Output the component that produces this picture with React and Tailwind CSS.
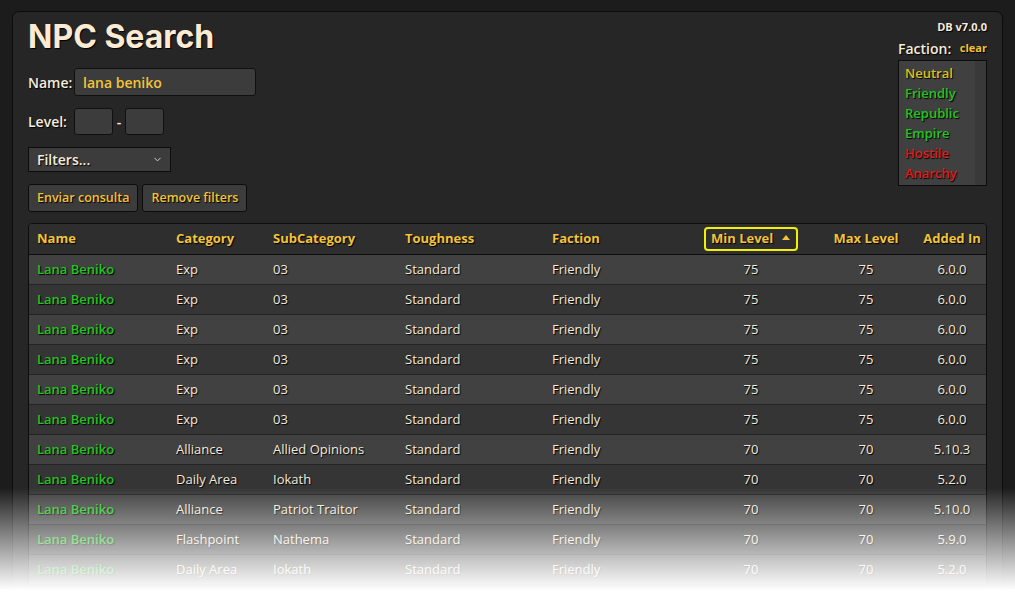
import { ChevronDown } from 'lucide-react';

const rows = [
  ['Exp', '03', 75, 75, '6.0.0'],
  ['Exp', '03', 75, 75, '6.0.0'],
  ['Exp', '03', 75, 75, '6.0.0'],
  ['Exp', '03', 75, 75, '6.0.0'],
  ['Exp', '03', 75, 75, '6.0.0'],
  ['Exp', '03', 75, 75, '6.0.0'],
  ['Alliance', 'Allied Opinions', 70, 70, '5.10.3'],
  ['Daily Area', 'Iokath', 70, 70, '5.2.0'],
  ['Alliance', 'Patriot Traitor', 70, 70, '5.10.0'],
  ['Flashpoint', 'Nathema', 70, 70, '5.9.0'],
  ['Daily Area', 'Iokath', 70, 70, '5.2.0'],
];

const factions = [
  ['Neutral', 'text-[#d8c21e]'],
  ['Friendly', 'text-[#22c322]'],
  ['Republic', 'text-[#22c322]'],
  ['Empire', 'text-[#22c322]'],
  ['Hostile', 'text-[#e21d1d]'],
  ['Anarchy', 'text-[#e21d1d]'],
];

const grid = 'grid grid-cols-[139px_97px_132px_147px_147px_120px_110px_68px]';
const shadow = '[text-shadow:1px_1px_1px_#000]';

function SortArrow() {
  return (
    <svg width="8" height="5" viewBox="0 0 8 5" className="ml-[9px] mb-[3px]">
      <path d="M0 5 L4 0 L8 5 Z" fill="#f2c43a" />
    </svg>
  );
}

export default function App() {
  return (
    <div className="relative h-[599px] w-full overflow-hidden bg-[#1c1c1c] px-[12px] pt-[11px] font-['Open_Sans',sans-serif]">
      <div className="h-[620px] rounded-t-[7px] border border-[#0c0c0c] bg-[#262626] px-[15px] pt-[7px]">
        <div className="flex justify-between">
          <div className="flex flex-col">
            <h1 className={`font-['Inter',sans-serif] text-[32px] font-bold leading-[36px] text-[#fcebd2] ${shadow}`}>NPC Search</h1>

            <div className="mt-[13px] flex items-center">
              <span className={`w-[46px] text-[14px] font-semibold text-[#f5ecdc] ${shadow}`}>Name:</span>
              <div className="flex h-[28px] w-[182px] items-center rounded-[3px] border border-[#101010] bg-[#3c3c3c] px-[8px] text-[14px] font-semibold text-[#f2c43a]">
                lana beniko
              </div>
            </div>

            <div className="mt-[12px] flex items-center">
              <span className={`w-[46px] text-[14px] font-semibold text-[#f5ecdc] ${shadow}`}>Level:</span>
              <div className="h-[27px] w-[39px] rounded-[3px] border border-[#101010] bg-[#3c3c3c]" />
              <span className="w-[12px] text-center text-[14px] font-semibold text-[#f5ecdc]">-</span>
              <div className="h-[27px] w-[39px] rounded-[3px] border border-[#101010] bg-[#3c3c3c]" />
            </div>

            <div className="mt-[12px] flex h-[25px] w-[143px] items-center justify-between border border-[#0c0c0c] bg-[#3c3c3c] pl-[8px] pr-[7px]">
              <span className={`text-[14px] font-semibold text-[#f5ecdc] ${shadow}`}>Filters...</span>
              <ChevronDown size={11} strokeWidth={2} className="text-[#dddddd]" />
            </div>

            <div className="mt-[12px] flex gap-[4px]">
              <button className={`h-[28px] rounded-[3px] border border-[#0c0c0c] bg-[#3c3c3c] px-[8px] text-[12.5px] font-semibold text-[#f2c43a] ${shadow}`}>
                Enviar consulta
              </button>
              <button className={`h-[28px] rounded-[3px] border border-[#0c0c0c] bg-[#3c3c3c] px-[8px] text-[12.5px] font-semibold text-[#f2c43a] ${shadow}`}>
                Remove filters
              </button>
            </div>
          </div>

          <div className="flex w-[89px] flex-col">
            <div className={`mt-[1px] text-right text-[11px] font-bold leading-[14px] text-[#f5ecdc] ${shadow}`}>DB v7.0.0</div>
            <div className="mt-[5px] flex items-end justify-between">
              <span className={`text-[14px] font-semibold leading-[20px] text-[#f5ecdc] ${shadow}`}>Faction:</span>
              <span className={`mb-[4px] text-[11px] font-bold leading-[14px] text-[#f2c43a] ${shadow}`}>clear</span>
            </div>
            <div className="mt-[1px] flex h-[126px] border border-[#0c0c0c] bg-[#404040]">
              <div className="flex flex-1 flex-col pl-[6px] pt-[2px]">
                {factions.map(([name, color]) => (
                  <span key={name} className={`text-[13px] font-semibold leading-[20px] ${color} ${shadow}`}>{name}</span>
                ))}
              </div>
              <div className="w-[11px] bg-[#393939]" />
            </div>
          </div>
        </div>

        <div className="mt-[11px] overflow-hidden rounded-t-[4px] border border-[#0c0c0c] bg-[#353535]">
          <div className={`${grid} h-[31px] items-center border-b border-[#0c0c0c] bg-[#2e2e2e] text-[13px] font-bold text-[#f2c43a] ${shadow}`}>
            <span className="pl-[8px]">Name</span>
            <span className="pl-[8px]">Category</span>
            <span className="pl-[8px]">SubCategory</span>
            <span className="pl-[8px]">Toughness</span>
            <span className="pl-[8px]">Faction</span>
            <div className="flex justify-center">
              <div className="flex h-[24px] w-[94px] items-center rounded-[4px] border-2 border-[#f4f000] pl-[5px]">
                <span>Min Level</span>
                <SortArrow />
              </div>
            </div>
            <span className="text-center">Max Level</span>
            <span className="pr-[6px] text-center">Added In</span>
          </div>
          {rows.map((r, i) => (
            <div
              key={i}
              className={`${grid} h-[30px] items-center border-b border-[#242424] text-[13px] text-[#f3eadb] ${shadow} ${i % 2 === 0 ? 'bg-[#414141]' : 'bg-[#353535]'}`}
            >
              <span className="pl-[8px] font-semibold text-[#22c322]">Lana Beniko</span>
              <span className="pl-[8px]">{r[0]}</span>
              <span className="pl-[8px]">{r[1]}</span>
              <span className="pl-[8px]">Standard</span>
              <span className="pl-[8px]">Friendly</span>
              <span className="text-center">{r[2]}</span>
              <span className="text-center">{r[3]}</span>
              <span className="pr-[6px] text-center">{r[4]}</span>
            </div>
          ))}
        </div>
      </div>

      <div className="absolute bottom-0 left-0 right-0 h-[111px] bg-[linear-gradient(to_bottom,rgba(255,255,255,0)_0%,#ffffff_92%)]" />
    </div>
  );
}
